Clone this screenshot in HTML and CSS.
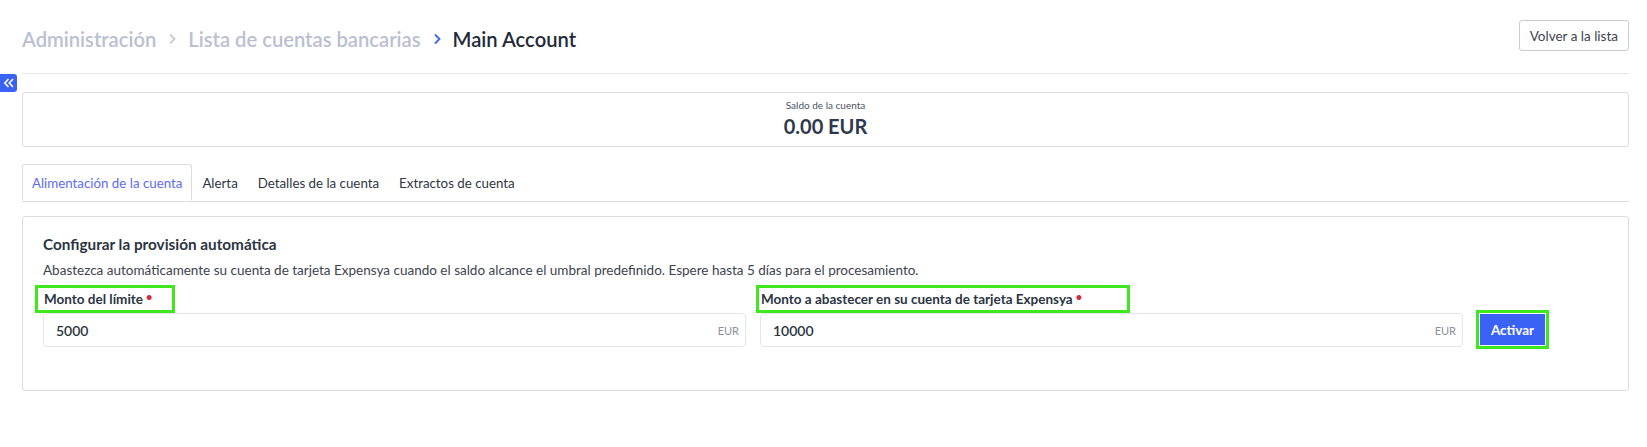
FILE: index.html
```html
<!DOCTYPE html>
<html lang="es">
<head>
<meta charset="utf-8">
<title>Main Account</title>
<link rel="stylesheet" href="styles.css">
</head>
<body>
<div class="page">
  <header class="header">
    <nav class="crumbs">
      <span class="crumb">Administración</span>
      <span class="sep">
        <svg width="10" height="14" viewBox="0 0 10 14"><path d="M3 2.5 L7.5 7 L3 11.5" fill="none" stroke="currentColor" stroke-width="1.5"/></svg>
      </span>
      <span class="crumb">Lista de cuentas bancarias</span>
      <span class="sep sep-active">
        <svg width="10" height="14" viewBox="0 0 10 14"><path d="M3 2.5 L7.5 7 L3 11.5" fill="none" stroke="currentColor" stroke-width="1.8"/></svg>
      </span>
      <span class="crumb crumb-current">Main Account</span>
    </nav>
    <button class="btn-outline">Volver a la lista</button>
  </header>

  <button class="side-toggle" aria-label="toggle">
    <svg width="12" height="10" viewBox="0 0 12 10"><path d="M5.5 1 L1.8 5 L5.5 9 M10 1 L6.3 5 L10 9" fill="none" stroke="#fff" stroke-width="1.6"/></svg>
  </button>

  <section class="balance">
    <div class="balance-label">Saldo de la cuenta</div>
    <div class="balance-value">0.00 EUR</div>
  </section>

  <ul class="tabs">
    <li class="tab tab-active">Alimentación de la cuenta</li>
    <li class="tab">Alerta</li>
    <li class="tab">Detalles de la cuenta</li>
    <li class="tab">Extractos de cuenta</li>
  </ul>

  <section class="panel">
    <h2 class="panel-title">Configurar la provisión automática</h2>
    <p class="panel-desc">Abastezca automáticamente su cuenta de tarjeta Expensya cuando el saldo alcance el umbral predefinido. Espere hasta 5 días para el procesamiento.</p>
    <div class="form-row">
      <div class="field">
        <label class="label"><span class="hl hl-1"></span>Monto del límite<span class="req">•</span></label>
        <div class="input">
          <span class="input-value">5000</span>
          <span class="input-suffix">EUR</span>
        </div>
      </div>
      <div class="field">
        <label class="label"><span class="hl hl-2"></span>Monto a abastecer en su cuenta de tarjeta Expensya<span class="req">•</span></label>
        <div class="input">
          <span class="input-value">10000</span>
          <span class="input-suffix">EUR</span>
        </div>
      </div>
      <div class="action">
        <button class="btn-primary">Activar</button>
      </div>
    </div>
  </section>
</div>
</body>
</html>
```

FILE: styles.css
```css
* { box-sizing: border-box; }

html, body {
  margin: 0;
  padding: 0;
  background: #ffffff;
}

body {
  font-family: Lato, "Open Sans", Arial, sans-serif;
  color: #2b3442;
}

.page {
  position: relative;
  padding: 0 18px 0 22px;
}

/* header */
.header {
  display: flex;
  align-items: center;
  justify-content: space-between;
  padding: 20px 0 22px;
  border-bottom: 1px solid #e6e7ea;
}

.crumbs {
  display: flex;
  align-items: center;
  gap: 11px;
  font-size: 20.2px;
  font-weight: 600;
  padding-top: 6px;
}

.crumb { color: #b9c0d2; }
.crumb-current { color: #1f2a3a; }

.sep {
  display: flex;
  align-items: center;
  color: #b9c0d2;
}
.sep-active { color: #3a63f5; }

.btn-outline {
  height: 31px;
  padding: 0 10px;
  border: 1px solid #c9ccd2;
  border-radius: 3px;
  background: #fff;
  color: #3b4350;
  font-family: inherit;
  font-size: 13.5px;
}

.side-toggle {
  position: absolute;
  left: 0;
  top: 74px;
  width: 17px;
  height: 18px;
  padding: 0;
  border: 0;
  border-radius: 0 3px 3px 0;
  background: #3a63f5;
  display: flex;
  align-items: center;
  justify-content: center;
}

/* balance card */
.balance {
  margin-top: 18px;
  height: 55px;
  border: 1px solid #dcdde0;
  border-radius: 3px;
  text-align: center;
  padding-top: 6px;
}

.balance-label {
  font-size: 10px;
  line-height: 13px;
  color: #4a5364;
}

.balance-value {
  margin-top: 2px;
  font-size: 20px;
  line-height: 24px;
  font-weight: 700;
  color: #2d3a4d;
}

/* tabs */
.tabs {
  list-style: none;
  margin: 17px 0 0;
  padding: 0;
  display: flex;
  border-bottom: 1px solid #dcdde0;
}

.tab {
  height: 37px;
  padding: 0 9px;
  display: flex;
  align-items: center;
  font-size: 13.3px;
  color: #2f3642;
  border: 1px solid transparent;
}

.tab-active {
  color: #5b6cf7;
  border-color: #dcdde0;
  border-bottom-color: #fff;
  border-radius: 3px 3px 0 0;
  margin-bottom: -1px;
  background: #fff;
}

/* panel */
.panel {
  margin-top: 14px;
  border: 1px solid #dcdde0;
  border-radius: 3px;
  padding: 17px 20px 43px;
}

.panel-title {
  margin: 0;
  font-size: 15.3px;
  line-height: 20px;
  font-weight: 700;
  color: #2b3442;
}

.panel-desc {
  margin: 8px 0 0;
  font-size: 13.5px;
  line-height: 17px;
  color: #3c4350;
}

.form-row {
  margin-top: 6px;
  display: grid;
  grid-template-columns: 703px 703px auto;
  column-gap: 14px;
  align-items: end;
}

.field {
  display: flex;
  flex-direction: column;
}

.label {
  position: relative;
  height: 28px;
  display: flex;
  align-items: center;
  font-size: 13.5px;
  font-weight: 700;
  color: #2b3442;
  padding-left: 1px;
}

.req {
  color: #d7263d;
  font-size: 11px;
  margin-left: 3px;
  position: relative;
  top: -3px;
}

.hl {
  position: absolute;
  top: 0;
  left: -8px;
  height: 28px;
  border: 3px solid #3ee81c;
}
.hl-1 { width: 140px; }
.hl-2 { width: 374px; left: -4px; }

.input {
  height: 34px;
  border: 1px solid #e3e5ea;
  border-radius: 4px;
  display: flex;
  align-items: center;
  justify-content: space-between;
  padding: 0 6px 0 12px;
}

.input-value {
  font-size: 14px;
  font-weight: 600;
  color: #2b3442;
}

.input-suffix {
  font-size: 11px;
  color: #8a909b;
}

.action {
  display: flex;
  align-items: center;
  padding-bottom: 2px;
}

.btn-primary {
  width: 65px;
  height: 31px;
  border: 0;
  background: #3a63f5;
  color: #fff;
  font-family: inherit;
  font-size: 13.5px;
  font-weight: 700;
  outline: 3px solid #3ee81c;
  outline-offset: 1px;
  margin-left: 3px;
}
```
